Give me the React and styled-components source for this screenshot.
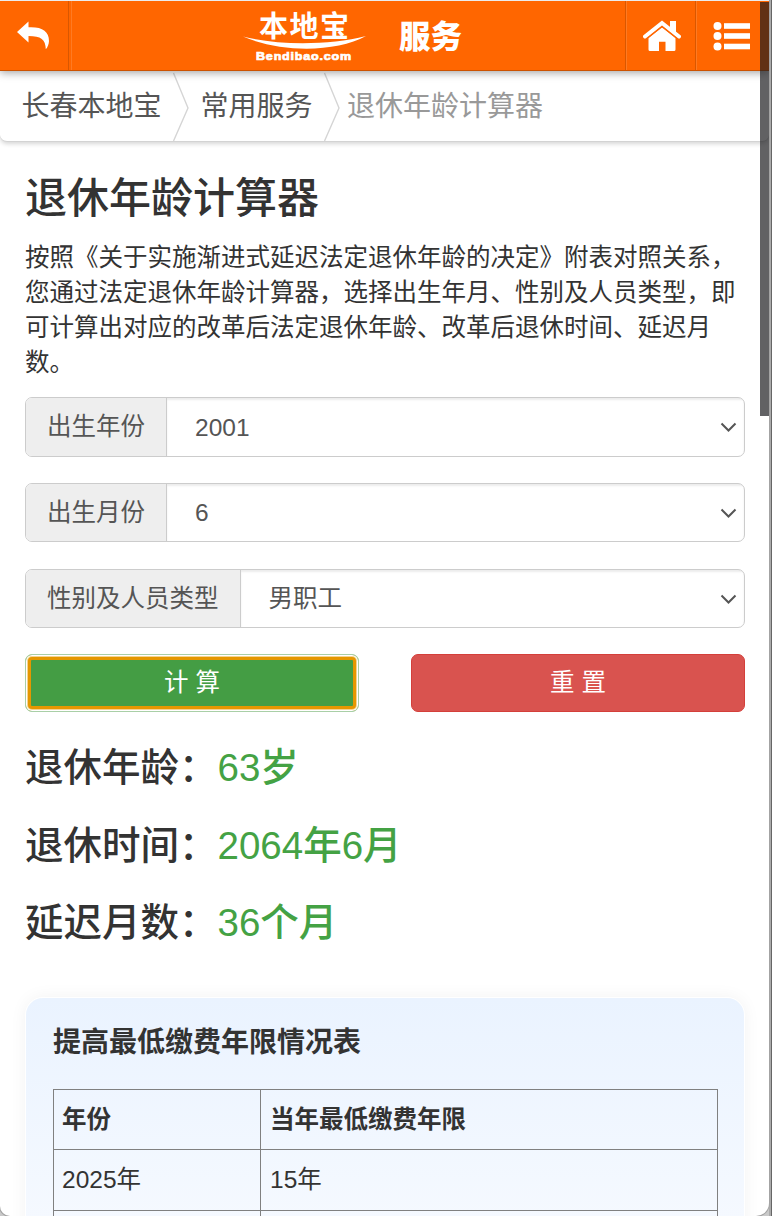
import React, { useState } from 'react';
import styled, { createGlobalStyle, css } from 'styled-components';

const GlobalStyle = createGlobalStyle`
  * {
    box-sizing: border-box;
  }

  body {
    margin: 0;
    height: 1216px;
    overflow: hidden;
    background: #c9c9c9;
    color: #333;
    font-family: "Liberation Sans", "Noto Sans CJK SC", sans-serif;
    font-size: 24.5px;
    line-height: 35px;
  }
`;

const Window = styled.div`
  display: flex;
  height: 1216px;
  background: linear-gradient(90deg, #c9c9c9 769px, #ababab 769px, #ababab 771px, #666 771px);
`;

const Page = styled.div`
  position: relative;
  width: 769px;
  height: 1216px;
  overflow: hidden;
  border-top: 1px solid #ececec;
  border-radius: 0 0 13px 10px;
  background: #fff;
  box-shadow: 0 0 0 1px #a3a3a3;
`;

const ScrollThumb = styled.div`
  position: absolute;
  top: 1px;
  right: 0;
  width: 9px;
  height: 414px;
  background: rgba(26, 26, 29, 0.69);
  z-index: 3;
`;

const Header = styled.header`
  position: relative;
  z-index: 2;
  display: flex;
  height: 70px;
  background: #f60;
  border-bottom: 1px solid #cc5200;
  box-shadow: 0 2px 8px rgba(0, 0, 0, 0.35);
`;

const HeaderButton = styled.a`
  display: flex;
  align-items: center;
  flex: none;
  width: ${props => props.$width}px;
  padding-left: ${props => props.$pad}px;
  ${props => (props.$side === 'left' ? css`
    border-right: 1px solid #d95700;
    box-shadow: 2px 0 0 #f60, 3px 0 0 #ff7a22;
  ` : css`
    border-left: 1px solid #d95700;
    box-shadow: inset 1px 0 0 #ff7a22;
  `)}
`;

const Brand = styled.div`
  display: flex;
  flex: 1;
  padding-left: 174px;
`;

const HeaderTitle = styled.h2`
  margin: 0 0 0 32px;
  color: #fff;
  font-size: 31.5px;
  font-weight: 900;
  line-height: 72px;
`;

const Breadcrumb = styled.nav`
  display: flex;
  height: 71px;
  padding-left: 21.5px;
  background: #fff;
  border-bottom: 1px solid #d3d3d3;
  border-radius: 0 0 7px 7px;
  box-shadow: 0 2px 4px rgba(0, 0, 0, 0.16);
  font-size: 28px;
  line-height: 71px;
`;

const Crumb = styled.span`
  color: ${props => (props.$active ? '#999' : '#555')};
`;

const Separator = styled.svg`
  flex: none;
  width: 17px;
  height: 70px;
  margin: 0 ${props => props.$after}px 0 10px;
`;

const Main = styled.main`
  padding: 33px 24px 0 25px;
`;

const Title = styled.h1`
  margin: 0;
  font-size: 42px;
  font-weight: 500;
  line-height: 48px;
`;

const Intro = styled.p`
  margin: 17px 0;
  white-space: nowrap;
`;

const InputGroup = styled.label`
  display: flex;
  height: ${props => props.$height}px;
  margin-bottom: ${props => props.$gap}px;
  border: 1px solid #ccc;
  border-radius: 7px;
  color: #555;
  line-height: 57px;
  overflow: hidden;
`;

const Addon = styled.span`
  flex: none;
  padding: 0 21px;
  background: #eee;
  border-right: 1px solid #ccc;
`;

const SelectBox = styled.span`
  display: flex;
  flex: 1;
  justify-content: space-between;
  align-items: center;
  padding: 0 7px 0 28px;
  box-shadow: inset 0 2px 2px rgba(0, 0, 0, 0.075);
`;

const Actions = styled.div`
  display: flex;
  justify-content: space-between;
`;

const Button = styled.button`
  width: 334px;
  height: 58px;
  padding: 0;
  border: 1px solid #d43f3a;
  border-radius: 7px;
  background: #d9534f;
  color: #fff;
  font: inherit;
  line-height: 56px;
`;

const FocusedButton = styled(Button)`
  border-color: #a9cfa7;
  background: #449d44;
  box-shadow: inset 0 0 0 1px #fff, inset 0 0 0 2px #f4d490, inset 0 0 0 5px #e59700;
`;

const Results = styled.div`
  margin-top: 17px;
`;

const Result = styled.h3`
  margin: 0;
  font-size: 38.5px;
  font-weight: 500;
  line-height: 77.5px;

  span {
    color: #44a244;
  }
`;

const Card = styled.section`
  width: 718px;
  height: 300px;
  margin: 36px 0 0 1px;
  padding: 26px 26px 0 27px;
  border-radius: 17px;
  background: linear-gradient(#eaf3ff, #f7faff 260px);
  box-shadow: 0 0 0 1px #fff, 0 0 18px rgba(0, 0, 0, 0.06);
`;

const CardTitle = styled.h4`
  margin: 0 0 27px;
  font-size: 28px;
  font-weight: 700;
  line-height: 38px;
`;

const Table = styled.table`
  width: 665px;
  table-layout: fixed;
  border-collapse: collapse;
  text-align: left;

  tr {
    height: 60.5px;
  }

  th,
  td {
    padding: 0 9px;
    border: 1px solid #808080;
  }

  th:first-child,
  td:first-child {
    padding-left: 8px;
  }

  th:first-child {
    width: 207px;
  }
`;

const BackIcon = () => (
  <svg width="34" height="30" viewBox="0 0 34 30" fill="#fff">
    <path d="M0 11 L11.5 0.5 V6.2 C25 5.5 32 10 32 20 C32 23 30.5 26.5 28.8 28.3 C28.6 18.5 24 15 11.5 15 V21.5 Z" />
  </svg>
);

const HomeIcon = () => (
  <svg width="38" height="32" viewBox="0 0 38 32" fill="#fff">
    <path d="M27 1 H33 V13 L27 8 Z" />
    <path d="M2 16.5 L19 3 L36 16.5" fill="none" stroke="#fff" strokeWidth="4" strokeLinecap="round" />
    <path d="M19 7 L32.5 18 V29.5 Q32.5 31 31 31 H22.5 V21.8 H16 V31 H7 Q5.5 31 5.5 29.5 V18 Z" />
    <path d="M4 18.6 L19 6.8 L34 18.6" fill="none" stroke="#f60" strokeWidth="1.1" />
  </svg>
);

const ListIcon = () => (
  <svg width="38" height="32" viewBox="0 0 38 32" fill="#fff">
    {[6, 16, 26.5].map(y => (
      <React.Fragment key={y}>
        <circle cx="4.5" cy={y} r="4" />
        <rect x="11" y={y - 2.8} width="26" height="5.6" />
      </React.Fragment>
    ))}
  </svg>
);

const Logo = () => (
  <svg width="124" height="69" viewBox="0 0 124 69" fill="#fff">
    <text x="16" y="35.5" fontSize="29" fontWeight="700" fontFamily="Noto Sans CJK SC" textLength="90">本地宝</text>
    <path d="M0 35.5 C35 44.5 86 44.5 123 35 C93 51.5 38 52 0 35.5 Z" stroke="#f60" strokeWidth="1" paintOrder="stroke" />
    <text
      x="13"
      y="58.8"
      fontSize="11"
      fontWeight="700"
      fontFamily="Liberation Sans"
      textLength="96"
      lengthAdjust="spacingAndGlyphs"
      letterSpacing="0.7"
      stroke="#fff"
      strokeWidth="0.7"
    >
      Bendibao.com
    </text>
  </svg>
);

const Chevron = () => (
  <svg width="17" height="12" viewBox="0 0 17 12" fill="none" stroke="#555" strokeWidth="2">
    <path d="M1.5 2.5 L8.5 9.5 L15.5 2.5" />
  </svg>
);

const CrumbArrow = ({ after }) => (
  <Separator $after={after} viewBox="0 0 17 70" fill="none" stroke="#d5d5d5" strokeWidth="1.4">
    <path d="M1.5 2 L16 37 L1.5 70" />
  </Separator>
);

const fields = [
  { label: '出生年份', value: '2001', height: 60, gap: 26 },
  { label: '出生月份', value: '6', height: 59, gap: 27 },
  { label: '性别及人员类型', value: '男职工', height: 59, gap: 26 },
];

const initialResults = [
  ['退休年龄', '63岁'],
  ['退休时间', '2064年6月'],
  ['延迟月数', '36个月'],
];

const App = () => {
  const [results, setResults] = useState(initialResults);

  return (
    <>
      <GlobalStyle />
      <Window>
        <Page>
          <ScrollThumb />
          <Header>
            <HeaderButton $width={69} $pad={17} $side="left"><BackIcon /></HeaderButton>
            <Brand>
              <Logo />
              <HeaderTitle>服务</HeaderTitle>
            </Brand>
            <HeaderButton $width={70} $pad={17}><HomeIcon /></HeaderButton>
            <HeaderButton $width={74} $pad={17}><ListIcon /></HeaderButton>
          </Header>
          <Breadcrumb>
            <Crumb>长春本地宝</Crumb>
            <CrumbArrow after={12} />
            <Crumb>常用服务</Crumb>
            <CrumbArrow after={7.5} />
            <Crumb $active>退休年龄计算器</Crumb>
          </Breadcrumb>
          <Main>
            <Title>退休年龄计算器</Title>
            <Intro>
              按照《关于实施渐进式延迟法定退休年龄的决定》附表对照关系，
              <br />
              您通过法定退休年龄计算器，选择出生年月、性别及人员类型，即
              <br />
              可计算出对应的改革后法定退休年龄、改革后退休时间、延迟月
              <br />
              数。
            </Intro>
            {fields.map(field => (
              <InputGroup key={field.label} $height={field.height} $gap={field.gap}>
                <Addon>{field.label}</Addon>
                <SelectBox>
                  {field.value}
                  <Chevron />
                </SelectBox>
              </InputGroup>
            ))}
            <Actions>
              <FocusedButton onClick={() => setResults(initialResults)}>计 算</FocusedButton>
              <Button onClick={() => setResults([])}>重 置</Button>
            </Actions>
            <Results>
              {results.map(([label, value]) => (
                <Result key={label}>{label}：<span>{value}</span></Result>
              ))}
            </Results>
            <Card>
              <CardTitle>提高最低缴费年限情况表</CardTitle>
              <Table>
                <thead>
                  <tr><th>年份</th><th>当年最低缴费年限</th></tr>
                </thead>
                <tbody>
                  <tr><td>2025年</td><td>15年</td></tr>
                  <tr><td /><td /></tr>
                </tbody>
              </Table>
            </Card>
          </Main>
        </Page>
      </Window>
    </>
  );
};

export default App;
